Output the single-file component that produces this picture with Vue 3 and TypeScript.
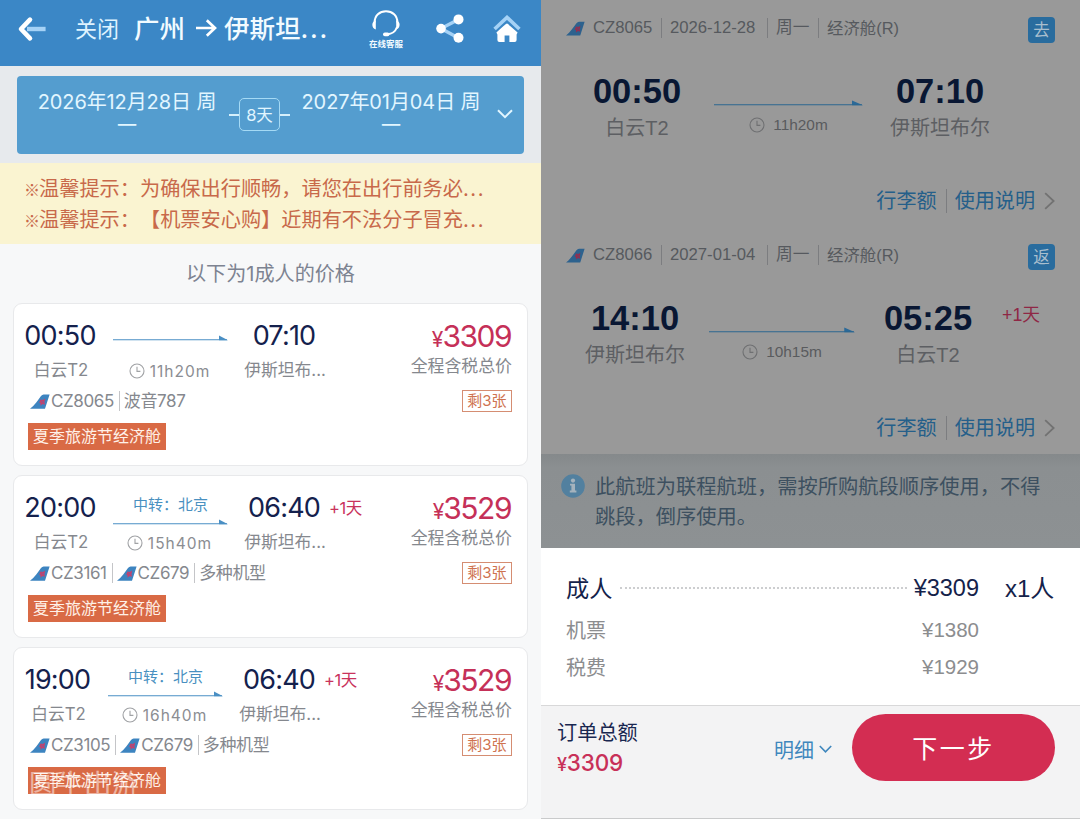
<script setup lang="ts">
import { h, type FunctionalComponent } from 'vue'

interface Fare {
  depart: string
  arrive: string
  transfer?: string
  duration: string
  nextDay?: boolean
  flights: string[]
  aircraft: string
  price: number
  narrow?: boolean
  watermark?: string
}

interface Leg {
  flight: string
  date: string
  tag: string
  depart: string
  from: string
  arrive: string
  to: string
  duration: string
  nextDay?: boolean
  kind: 'outbound' | 'inbound'
}

const fares: Fare[] = [
  { depart: '00:50', arrive: '07:10', duration: '11h20m', flights: ['CZ8065'], aircraft: '波音787', price: 3309 },
  { depart: '20:00', arrive: '06:40', transfer: '中转：北京', duration: '15h40m', nextDay: true, flights: ['CZ3161', 'CZ679'], aircraft: '多种机型', price: 3529 },
  { depart: '19:00', arrive: '06:40', transfer: '中转：北京', duration: '16h40m', nextDay: true, flights: ['CZ3105', 'CZ679'], aircraft: '多种机型', price: 3529, narrow: true, watermark: '圆牛出游' },
]

const legs: Leg[] = [
  { flight: 'CZ8065', date: '2026-12-28', tag: '去', depart: '00:50', from: '白云T2', arrive: '07:10', to: '伊斯坦布尔', duration: '11h20m', kind: 'outbound' },
  { flight: 'CZ8066', date: '2027-01-04', tag: '返', depart: '14:10', from: '伊斯坦布尔', arrive: '05:25', to: '白云T2', duration: '10h15m', nextDay: true, kind: 'inbound' },
]

const Tail: FunctionalComponent = () =>
  h('svg', { viewBox: '0 0 20 15', width: 20, height: 15 }, [
    h('path', { d: 'M0 14.8C4.5 11.6 8 6 11 2Q12.2.4 13.6.4H19.6L15 14.8Z', fill: '#3d84c0' }),
    h('path', { d: 'M9.2 8.6 10.6 5.4 12.8 6 15.2 4.6 14.4 8.2 15 10.8 12.6 10 10.4 11.8 10.6 9.4Z', fill: '#c4416d' }),
    h('path', { d: 'M11.4 7.2 13.4 8.6', stroke: '#7b5f9b', 'stroke-width': 1 }),
  ])

const Clock: FunctionalComponent = () =>
  h('svg', { viewBox: '0 0 16 16', width: 16, height: 16, fill: 'none', stroke: 'currentColor', 'stroke-width': 1.1 }, [
    h('circle', { cx: 8, cy: 8, r: 7 }),
    h('path', { d: 'M8 3.8V8.4H11.4' }),
  ])
</script>

<template>
  <div class="screen">
    <section class="list">
      <header class="bar">
        <svg class="back" viewBox="0 0 30 26" width="30" height="26" fill="none">
          <path d="M10 13H28.6" stroke="#a5d2f6" stroke-width="4.4" />
          <path d="M13 3.6 4 13 13 22.4" stroke="#fff" stroke-width="4.6" stroke-linejoin="round" stroke-linecap="round" />
        </svg>
        <span class="close">关闭</span>
        <h1>
          <span>广州</span>
          <svg viewBox="0 0 22 20" width="22" height="20" fill="none" stroke="#fff" stroke-width="2.7"><path d="M1 10H20M11.8 2.2 20 10 11.8 17.8" /></svg>
          <span>伊斯坦<span class="dots">...</span></span>
        </h1>
        <div class="service">
          <svg viewBox="0 0 30 27" width="30" height="27" fill="none" stroke="#fff">
            <path d="M3.6 12.5C3.6 5.6 8.6 1.3 15 1.3S26.4 5.6 26.4 12.5" stroke-width="2" />
            <path d="M26 17C24.6 21.2 21 24 16 24.2" stroke-width="1.9" />
            <path d="M4.8 10.2C.2 11.2.2 18.2 4.8 19.4ZM25.2 10.2C29.8 11.2 29.8 18.2 25.2 19.4Z" fill="#fff" stroke="none" />
            <rect x="12" y="22.4" width="6.5" height="3.8" rx="1.9" fill="#fff" stroke="none" />
          </svg>
          <span>在线客服</span>
        </div>
        <svg class="share" viewBox="0 0 28 30" width="28" height="30">
          <path d="M22.5 5.4 5 14.6 22.5 24" fill="none" stroke="#a5d2f6" stroke-width="3.4" />
          <g fill="#fff"><circle cx="5" cy="14.6" r="4.8" /><circle cx="22.5" cy="5.4" r="5" /><circle cx="22.5" cy="23.8" r="5" /></g>
        </svg>
        <svg class="home" viewBox="0 0 28 28" width="28" height="28">
          <path d="M1.6 14 14 2.4 26.4 14" fill="none" stroke="#a5d2f6" stroke-width="3.6" />
          <path d="M14 8.6Q15 8.6 24.6 17.6L23.6 19.6V25Q23.6 27 21.6 27H16.4V20.5H11.6V27H6.4Q4.4 27 4.4 25V19.6L3.4 17.6Q13 8.6 14 8.6Z" fill="#fff" />
        </svg>
      </header>

      <div class="dates">
        <div class="date">2026年12月28日 周<br />一</div>
        <div class="days"><b></b><span>8天</span><b></b></div>
        <div class="date">2027年01月04日 周<br />一</div>
        <svg viewBox="0 0 16 10" width="16" height="10" fill="none" stroke="#e2f6ff" stroke-width="2"><path d="M1 1.2 8 8.2 15 1.2" /></svg>
      </div>

      <div class="tips">
        <p><small>※</small>温馨提示：为确保出行顺畅，请您在出行前务必<span class="dots">...</span></p>
        <p><small>※</small>温馨提示：【机票安心购】近期有不法分子冒充<span class="dots">...</span></p>
      </div>

      <p class="caption">以下为1成人的价格</p>

      <article v-for="(f, i) in fares" :key="i" class="card">
        <div class="route" :class="{ narrow: f.narrow }">
          <div class="stop dep"><strong>{{ f.depart }}</strong><span>白云T2</span></div>
          <div class="mid">
            <div class="via" :class="{ direct: !f.transfer }">{{ f.transfer }}</div>
            <svg class="arrow" viewBox="0 0 115 6" width="115" height="6"><path d="M106 .4 115 5.2H106Z" fill="#4a8fc4" /><path d="M0 4.8H114" stroke="#4a8fc4" stroke-width="1.1" /></svg>
            <div class="dur"><Clock /><span>{{ f.duration }}</span></div>
          </div>
          <div class="stop arr"><strong>{{ f.arrive }}</strong><span>伊斯坦布...</span></div>
          <em v-if="f.nextDay">+1天</em>
        </div>
        <div class="fare">
          <div class="price"><small>¥</small>{{ f.price }}</div>
          <div class="note">全程含税总价</div>
          <div class="left">剩3张</div>
        </div>
        <div class="flights">
          <span v-for="n in f.flights" :key="n" class="no"><Tail />{{ n }}</span>
          <span class="craft">{{ f.aircraft }}</span>
        </div>
        <div class="promo">夏季旅游节经济舱<span v-if="f.watermark" class="mark">{{ f.watermark }}</span></div>
      </article>
      <div class="card next"></div>
    </section>

    <section class="order">
      <div v-for="l in legs" :key="l.flight" class="leg" :class="l.kind">
        <div class="meta">
          <Tail />
          <span>{{ l.flight }}</span><span>{{ l.date }}</span><span>周一</span><span>经济舱(R)</span>
          <b>{{ l.tag }}</b>
        </div>
        <div class="trip">
          <div class="end a"><strong>{{ l.depart }}</strong><span>{{ l.from }}</span></div>
          <div class="path">
            <svg class="line" viewBox="0 0 149 6" height="6" preserveAspectRatio="none"><path d="M138 .4 149 5.2H138Z" fill="#2b6998" /><path d="M0 4.8H148" stroke="#2d6790" stroke-width="1.1" /></svg>
            <div class="time"><Clock /><span>{{ l.duration }}</span></div>
          </div>
          <div class="end b"><strong>{{ l.arrive }}</strong><span>{{ l.to }}</span></div>
          <em v-if="l.nextDay">+1天</em>
        </div>
        <div class="links">
          <span>行李额</span><span>使用说明</span>
          <svg viewBox="0 0 11 18" width="11" height="18" fill="none" stroke="#727272" stroke-width="1.8"><path d="M1.2 1.2 9.6 9 1.2 16.8" /></svg>
        </div>
      </div>

      <div class="notice">
        <svg viewBox="0 0 24 24" width="24" height="24"><circle cx="12" cy="12" r="11.8" fill="#52809f" /><g fill="#a5b3bd"><circle cx="12" cy="6.6" r="2.1" /><path d="M9 9.8H14V16.6H15.4V18.4H8.8V16.6H10.4V11.6H9Z" /></g></svg>
        <p>此航班为联程航班，需按所购航段顺序使用，不得跳段，倒序使用。</p>
      </div>

      <div class="sheet">
        <div class="row main"><span class="who">成人</span><i></i><span class="sum">¥3309</span><span class="qty">x1人</span></div>
        <div class="row"><span>机票</span><span class="sum">¥1380</span></div>
        <div class="row"><span>税费</span><span class="sum">¥1929</span></div>
      </div>

      <footer>
        <div class="total"><span>订单总额</span><strong><small>¥</small>3309</strong></div>
        <div class="detail">明细<svg viewBox="0 0 13 8" width="13" height="8" fill="none" stroke="#3f87bd" stroke-width="1.6"><path d="M.8 1 6.5 6.8 12.2 1" /></svg></div>
        <button>下一步</button>
      </footer>
    </section>
  </div>
</template>

<style>
body { margin: 0; overflow: hidden; }
</style>

<style scoped>
* { box-sizing: border-box; }
p, h1 { margin: 0; }
i, em { font-style: normal; }
svg { flex: none; display: block; }
.screen { display: flex; width: 1080px; height: 819px; overflow: hidden; text-spacing-trim: space-all; }
.list { width: 541px; height: 819px; overflow: hidden; background: #f7f8f9; font-family: Inter, "Noto Sans CJK SC", sans-serif; white-space: nowrap; }

.bar { display: flex; height: 66px; background: #3b87c6; color: #f2fbff; align-items: flex-start; }
.back { margin: 16px 0 0 17px; }
.close { margin: 13px 0 0 28px; width: 45px; font-size: 22px; line-height: 32px; color: #dff3ff; }
h1 { display: flex; margin: 13px 0 0 14px; width: 197px; font-size: 25.5px; line-height: 32px; font-weight: 500; }
h1 svg { margin: 5px 7px 0 10px; }
h1 .dots { letter-spacing: 1.8px; }
.service { display: flex; flex-direction: column; align-items: center; width: 36px; margin: 10px 0 0 37px; }
.service span { font-size: 8.5px; line-height: 12px; margin-top: 1px; font-weight: 700; }
.share { margin: 14px 0 0 32px; }
.home { margin: 15px 0 0 29px; }

.dates { display: flex; align-items: flex-start; margin: 10px 0 0 17px; width: 507px; height: 78px; border-radius: 4px; background: #549dcf; color: #e2f6ff; box-shadow: 0 0 0 40px #e7eaed; clip-path: inset(-10px -17px -9px -17px); }
.date { width: 184px; font-size: 20px; line-height: 24px; margin: 14px 0 0 18px; text-align: center; letter-spacing: -.1px; }
.days { display: flex; align-items: center; margin: 22px 0 0 10px; width: 61px; height: 33px; }
.days b { width: 10px; height: 2px; background: #d5effb; }
.days span { width: 41px; height: 33px; border: 1px solid #a5daf5; border-radius: 5px; font-size: 16.5px; line-height: 33px; text-align: center; }
.days + .date { margin-left: 9px; }
.dates > svg { margin: 33px 0 0 14px; }

.tips { height: 81px; margin-top: 9px; padding: 10px 0 0 25px; background: #faf4d1; color: #c8694a; font-size: 20.2px; }
.tips p { height: 31px; line-height: 31px; }
.tips small { display: inline-block; width: 14px; font: 500 16px/20px "Noto Sans CJK SC", sans-serif; text-indent: -1px; }
.tips .dots { letter-spacing: 1.6px; }
.caption { height: 59px; line-height: 60px; text-align: center; font-size: 20.1px; color: #7d8391; }

.card { position: relative; width: 515px; height: 163px; margin: 0 0 9px 13px; background: #fff; border: 1px solid #e8e9eb; border-radius: 9px; display: grid; grid-template-columns: 1fr 120px; grid-template-rows: 81px 32px 27px; }
.next { height: 40px; }
.route { display: flex; padding-left: 11px; }
.stop { display: flex; flex-direction: column; align-items: center; }
.stop strong { font-weight: 400; font-size: 27px; line-height: 34px; letter-spacing: -.8px; color: #14214d; margin: 15px 2px 0 0; }
.stop span { font-size: 16.8px; line-height: 24px; margin-top: 5px; color: #85888e; }
.dep { width: 72px; }
.narrow .dep { width: 67px; }
.mid { width: 115px; margin-left: 16px; }
.via { height: 43px; padding-top: 16px; font-size: 15px; line-height: 26px; text-align: center; color: #4990c0; }
.via.direct { height: 31px; }
.direct + .arrow { margin-bottom: 20px; }
.dur { display: flex; justify-content: center; align-items: center; gap: 5px; height: 20px; margin: 8px 1px 0 -1px; color: #8b8d92; font-size: 15.5px; letter-spacing: 1px; }
.dur svg { color: #a0a2a5; }
.arr { width: 82px; margin-left: 16px; }
em { color: #c9335c; }
.route em { font-size: 16.5px; line-height: 26px; margin: 19px 0 0 3px; letter-spacing: -.4px; }
.fare { grid-row: 1 / 4; grid-column: 2; display: flex; flex-direction: column; align-items: flex-end; padding-right: 15px; }
.price { color: #c53058; font-size: 30px; line-height: 38px; letter-spacing: -1.5px; margin: 13px 1px 0 0; }
.price small { font-size: 21px; letter-spacing: -1px; }
.note { font-size: 16.9px; line-height: 24px; color: #85888e; margin-top: -5px; }
.left { width: 50px; height: 22px; margin-top: 12px; border: 1px solid #d58d72; color: #cf7350; font-size: 15px; line-height: 20px; text-align: center; }
.flights { grid-column: 1; display: flex; align-items: center; padding-left: 16px; font-size: 17px; letter-spacing: -.4px; color: #85888e; line-height: 24px; height: 32px; }
.flights span { display: flex; align-items: center; }
.no { padding-right: 5px; border-right: 1px solid #c4c5c8; margin-right: 4px; height: 20px; }
.no svg { margin: 0 1px 0 0; }
.promo { position: relative; grid-column: 1; margin: 6px 0 0 14px; width: 138px; height: 27px; background: #d96a45; color: #fff1e8; font-size: 16px; line-height: 26px; text-align: center; }
.mark { position: absolute; left: 1px; top: 2px; font-size: 27.5px; line-height: 31px; color: rgba(255, 255, 255, .5); }

.order { display: flex; flex-direction: column; width: 539px; height: 819px; background: #999; font-family: "Liberation Sans", "Noto Sans CJK SC", sans-serif; white-space: nowrap; }
.leg { height: 227px; flex: none; }
.meta { display: flex; align-items: center; height: 55px; padding: 0 25px 0 25px; font-size: 16.7px; color: #56595e; }
.meta svg { filter: brightness(.74); margin: 2px 7px 0 0; width: 19px; }
.meta span { line-height: 20px; padding: 0 8px 0 8px; border-left: 1px solid #7c7d80; }
.meta span:nth-of-type(1) { border: 0; padding-left: 1px; width: 69px; }
.meta span:nth-of-type(2) { width: 106px; }
.meta span:nth-of-type(3) { width: 51px; }
.meta span:nth-of-type(4) { font-size: 16.4px; }
.meta b { width: 27px; height: 26px; margin: 4px 0 0 auto; border-radius: 4px; background: #296c9e; color: #a9bfce; font-weight: 400; font-size: 16.5px; line-height: 27px; text-align: center; }
.trip { display: flex; height: 123px; }
.end { display: flex; flex-direction: column; align-items: center; width: 102px; }
.end strong { font-size: 34.5px; line-height: 40px; margin-top: 16px; color: #091733; }
.end span { font-size: 20px; line-height: 28px; margin-top: 3px; color: #5d5f63; }
.a { margin-left: 45px; }
.path { width: 149px; margin: 45px 0 0 26px; }
.line { width: 100%; }
.b { margin-left: 26px; }
.inbound .a { margin-left: 43px; }
.inbound .path { width: 146px; margin-left: 23px; }
.inbound .b { margin-left: 22px; }
.time { display: flex; align-items: center; justify-content: center; gap: 8px; height: 20px; margin-top: 9px; font-size: 15.4px; color: #595b5e; }
.time svg { color: #6f7072; }
.trip em { margin: 20px 0 0 23px; font-size: 17.8px; line-height: 26px; color: #8f2745; }
.links { display: flex; align-items: center; justify-content: flex-end; height: 45px; padding-right: 25px; color: #255f8a; font-size: 20.1px; line-height: 24px; }
.links span + span { border-left: 1px solid #7c7d80; margin-left: 9px; padding-left: 8px; }
.links svg { margin-left: 9px; }
.notice { display: flex; flex: none; height: 94px; padding: 21px 0 0 20px; background: linear-gradient(#85898b, #8b8f91 14px, #8d9193); color: #3d5060; }
.notice p { width: 460px; margin: -3px 0 0 10px; white-space: normal; font-size: 20.25px; line-height: 30px; }
.notice svg { margin-top: -1px; }
.sheet { flex: none; height: 157px; padding-top: 18px; background: #fff; }
.row { display: flex; align-items: center; height: 37px; padding-left: 25px; font-size: 20px; color: #8c8d8f; }
.row .sum { width: 70px; margin-left: auto; margin-right: 101px; text-align: right; font-size: 20.5px; }
.main { height: 45px; font-size: 23.2px; color: #14224a; }
.main i { flex: 1; height: 0; margin: 0 0 2px 8px; border-top: 2px dotted #cdced0; }
.main .who { margin-bottom: 4px; }
.main .sum { margin: 0; width: 72px; font-size: 23.5px; }
.main .qty { margin: 0 0 4px 26px; width: 75px; font-size: 24px; }
footer { display: flex; flex: 1; background: #f3f3f4; border-top: 1px solid #d8d8d9; border-bottom: 1px solid #c9cacb; }
.total { width: 160px; margin: 13px 0 0 16px; display: flex; flex-direction: column; font-size: 20.2px; line-height: 28px; color: #192750; }
.total strong { font-family: Inter, sans-serif; font-weight: 500; font-size: 22.5px; line-height: 32px; letter-spacing: -.2px; color: #c83058; }
.total small { font-size: 18px; }
.detail { display: flex; align-items: center; gap: 5px; width: 76px; height: 30px; margin: 28px 0 0 57px; font-size: 20px; color: #3f87bd; }
button { width: 203px; height: 67px; margin: 8px 0 0 2px; border: 0; border-radius: 34px; background: #d32d52; color: #fff; padding: 3px 0 0; font: 25px/64px "Liberation Sans", "Noto Sans CJK SC", sans-serif; letter-spacing: 2.5px; }
</style>
